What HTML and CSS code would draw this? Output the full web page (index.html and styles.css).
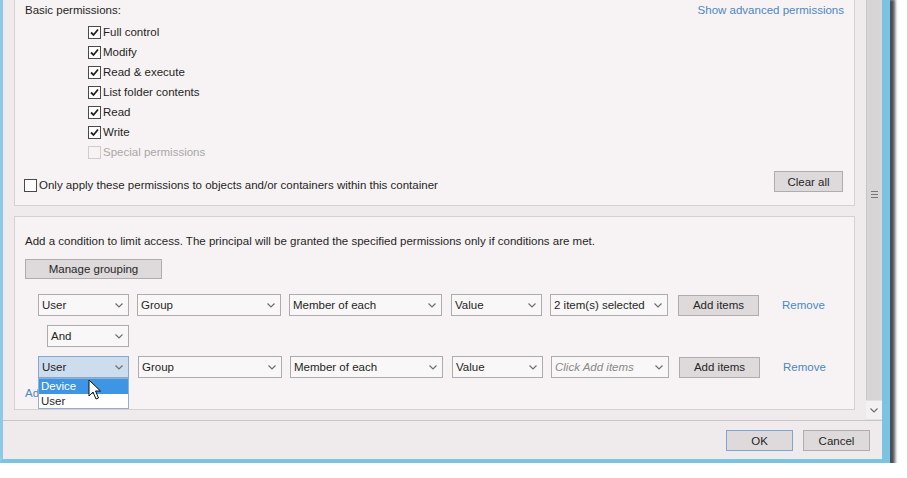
FILE: index.html
```html
<!DOCTYPE html>
<html lang="en">
<head>
    <meta charset="UTF-8">
    <title>Permission Entry</title>
    <link rel="stylesheet" href="styles.css">
</head>
<body>
    <div class="window">
        <div class="content">
            <div class="main">
                <!-- basic permissions -->
                <section class="panel perms">
                    <div class="perm-head">
                        <span>Basic permissions:</span>
                        <a class="link" href="#">Show advanced permissions</a>
                    </div>
                    <ul class="perm-list">
                        <li class="check"><span class="box"><svg viewBox="0 0 11 11"><path d="M2 5.5 L4.5 8 L9 2.5"/></svg></span>Full control</li>
                        <li class="check"><span class="box"><svg viewBox="0 0 11 11"><path d="M2 5.5 L4.5 8 L9 2.5"/></svg></span>Modify</li>
                        <li class="check"><span class="box"><svg viewBox="0 0 11 11"><path d="M2 5.5 L4.5 8 L9 2.5"/></svg></span>Read &amp; execute</li>
                        <li class="check"><span class="box"><svg viewBox="0 0 11 11"><path d="M2 5.5 L4.5 8 L9 2.5"/></svg></span>List folder contents</li>
                        <li class="check"><span class="box"><svg viewBox="0 0 11 11"><path d="M2 5.5 L4.5 8 L9 2.5"/></svg></span>Read</li>
                        <li class="check"><span class="box"><svg viewBox="0 0 11 11"><path d="M2 5.5 L4.5 8 L9 2.5"/></svg></span>Write</li>
                        <li class="check disabled"><span class="box"></span>Special permissions</li>
                    </ul>
                    <div class="perm-foot">
                        <label class="check only"><span class="box"></span>Only apply these permissions to objects and/or containers within this container</label>
                        <button class="btn clear">Clear all</button>
                    </div>
                </section>

                <!-- conditions -->
                <section class="panel conditions">
                    <p class="hint">Add a condition to limit access. The principal will be granted the specified permissions only if conditions are met.</p>
                    <button class="btn grouping">Manage grouping</button>

                    <div class="cond-row">
                        <div class="select w-kind">User<svg class="chev" viewBox="0 0 8 5"><path d="M0.5 0.5 L4 4 L7.5 0.5"/></svg></div>
                        <div class="select w-attr">Group<svg class="chev" viewBox="0 0 8 5"><path d="M0.5 0.5 L4 4 L7.5 0.5"/></svg></div>
                        <div class="select w-op">Member of each<svg class="chev" viewBox="0 0 8 5"><path d="M0.5 0.5 L4 4 L7.5 0.5"/></svg></div>
                        <div class="select w-val">Value<svg class="chev" viewBox="0 0 8 5"><path d="M0.5 0.5 L4 4 L7.5 0.5"/></svg></div>
                        <div class="select w-items">2 item(s) selected<svg class="chev" viewBox="0 0 8 5"><path d="M0.5 0.5 L4 4 L7.5 0.5"/></svg></div>
                        <button class="btn add">Add items</button>
                        <a class="link remove" href="#">Remove</a>
                    </div>

                    <div class="op-row">
                        <div class="select w-and">And<svg class="chev" viewBox="0 0 8 5"><path d="M0.5 0.5 L4 4 L7.5 0.5"/></svg></div>
                    </div>

                    <div class="cond-row second">
                        <div class="combo">
                            <div class="select w-kind focused">User<svg class="chev" viewBox="0 0 8 5"><path d="M0.5 0.5 L4 4 L7.5 0.5"/></svg></div>
                            <ul class="dropdown">
                                <li class="hl">Device</li>
                                <li>User</li>
                            </ul>
                            <svg class="cursor" viewBox="0 0 13 21"><path d="M1 1 L1 17 L5 13 L8 20 L10.5 19 L7.5 12 L12.5 12 Z"/></svg>
                        </div>
                        <div class="select w-attr">Group<svg class="chev" viewBox="0 0 8 5"><path d="M0.5 0.5 L4 4 L7.5 0.5"/></svg></div>
                        <div class="select w-op">Member of each<svg class="chev" viewBox="0 0 8 5"><path d="M0.5 0.5 L4 4 L7.5 0.5"/></svg></div>
                        <div class="select w-val">Value<svg class="chev" viewBox="0 0 8 5"><path d="M0.5 0.5 L4 4 L7.5 0.5"/></svg></div>
                        <div class="select w-items placeholder">Click Add items<svg class="chev" viewBox="0 0 8 5"><path d="M0.5 0.5 L4 4 L7.5 0.5"/></svg></div>
                        <button class="btn add">Add items</button>
                        <a class="link remove" href="#">Remove</a>
                    </div>

                    <a class="link add-cond" href="#">Add a condition</a>
                </section>
            </div>

            <!-- scrollbar -->
            <div class="scrollbar">
                <div class="thumb"><span class="grip"></span></div>
                <div class="arrow-down"><svg viewBox="0 0 8 5"><path d="M0.5 0.5 L4 4 L7.5 0.5"/></svg></div>
            </div>
        </div>

        <div class="footer">
            <button class="btn default">OK</button>
            <button class="btn">Cancel</button>
        </div>
    </div>
</body>
</html>
```

FILE: styles.css
```css
body {
    margin: 0;
    background: #ffffff;
    color: #1f1f1f;
    font-family: "Liberation Sans", Arial, sans-serif;
    font-size: 11.5px;
    overflow: hidden;
}

/* Окно диалога */
.window {
    width: 890px;
    box-sizing: border-box;
    margin-top: -6px;
    background: #efebec;
    border-left: 3px solid #8ccae6;
    border-right: 8px solid #7cc3e0;
    border-bottom: 4px solid #7cc3e0;
    box-shadow: 5px 5px 3px rgba(45, 47, 58, 0.85);
}

.content {
    display: flex;
}

.main {
    flex: 1;
    padding: 0 11px 10px;
}

.panel {
    background: #f7f3f4;
    border: 1px solid #d5d1d2;
}

.link {
    color: #4a88c7;
    text-decoration: none;
}

.btn {
    font: inherit;
    color: #262626;
    background: #dedadb;
    border: 1px solid #adadad;
    box-sizing: border-box;
    padding: 0;
    height: 20px;
}

/* Basic permissions */
.perms {
    padding: 5px 10px 13px;
}

.perm-head {
    display: flex;
    justify-content: space-between;
    line-height: 20px;
}

.perm-list {
    list-style: none;
    margin: 2px 0 0;
    padding: 0 0 0 63px;
}

.check {
    display: flex;
    align-items: center;
    gap: 2px;
    height: 20px;
}

.box {
    width: 13px;
    height: 13px;
    box-sizing: border-box;
    border: 1px solid #4a4a4a;
    background: #ffffff;
    display: flex;
}

.box svg {
    width: 11px;
    height: 11px;
    fill: none;
    stroke: #222;
    stroke-width: 1.8;
}

.check.disabled {
    color: #a9a7a8;
}
.check.disabled .box {
    border-color: #cfcccd;
    background: #f7f3f4;
}

.perm-foot {
    display: flex;
    justify-content: space-between;
    align-items: flex-start;
    margin-top: 9px;
}

.only {
    height: 14px;
    margin: 7px 0 0 -1px;
}

.clear {
    width: 69px;
    height: 21px;
    margin-right: 1px;
}

/* Conditions */
.conditions {
    margin-top: 10px;
    padding: 14px 10px 9px;
}

.hint {
    margin: 0;
    line-height: 20px;
}

.grouping {
    display: block;
    width: 137px;
    margin-top: 8px;
}

.cond-row {
    display: flex;
    align-items: center;
    height: 22px;
    margin: 15px 0 0 13px;
}
.cond-row.second {
    margin-top: 9px;
}

.select {
    height: 22px;
    box-sizing: border-box;
    border: 1px solid #acacac;
    background: #f9f7f7;
    display: flex;
    align-items: center;
    justify-content: space-between;
    padding: 0 5px 0 3px;
    margin-right: 8px;
}

.chev {
    width: 8px;
    height: 5px;
    fill: none;
    stroke: #707070;
    stroke-width: 1.2;
}

.w-kind { width: 91px; }
.w-attr { width: 144px; }
.w-op { width: 153px; margin-right: 9px; }
.w-val { width: 91px; }
.w-items { width: 118px; margin-right: 10px; }
.w-and { width: 82px; }

.placeholder {
    color: #8a8a8a;
    font-style: italic;
}

.combo {
    position: relative;
    margin-right: 9px;
}
.combo .select {
    margin-right: 0;
}

.select.focused {
    background: #cddded;
    border-color: #86a8cc;
}

/* Выпадающий список */
.dropdown {
    position: absolute;
    left: 0;
    top: 100%;
    width: 91px;
    box-sizing: border-box;
    margin: 0;
    padding: 0;
    list-style: none;
    background: #ffffff;
    border: 1px solid #8fb0cf;
    z-index: 5;
}

.dropdown li {
    line-height: 14px;
    padding-left: 2px;
}

.dropdown li.hl {
    background: #3d95e4;
    color: #ffffff;
    line-height: 15px;
}

.cursor {
    position: absolute;
    left: 50px;
    top: 23px;
    width: 13px;
    height: 21px;
    fill: #ffffff;
    stroke: #111;
    stroke-width: 1;
    z-index: 6;
}

.add {
    width: 81px;
    height: 21px;
}

.remove {
    margin-left: 23px;
}

.op-row {
    margin: 9px 0 0 22px;
    display: flex;
}

.add-cond {
    display: block;
    margin-top: 8px;
    line-height: 14px;
}

/* Скроллбар */
.scrollbar {
    width: 16px;
    display: flex;
    flex-direction: column;
    background: #e4e1e2;
}

.thumb {
    flex: 1;
    background: #d8d5d6;
    border-left: 1px solid #c9c6c7;
    display: flex;
    align-items: center;
    justify-content: center;
}

.grip {
    width: 7px;
    height: 7px;
    background: repeating-linear-gradient(#777 0 1px, transparent 1px 3px);
    margin-top: -6px;
}

.arrow-down {
    height: 18px;
    margin: 1px 0 1px;
    background: #f3f1f1;
    display: flex;
    align-items: center;
    justify-content: center;
}

.arrow-down svg {
    width: 8px;
    height: 5px;
    fill: none;
    stroke: #707070;
    stroke-width: 1.2;
}

/* Кнопки внизу */
.footer {
    height: 39px;
    box-sizing: border-box;
    border-top: 1px solid #c9c6c7;
    display: flex;
    justify-content: flex-end;
    gap: 10px;
    padding: 9px 12px 0;
}

.footer .btn {
    width: 67px;
    height: 21px;
}

.footer .default {
    border-color: #7ea6d2;
}
```
